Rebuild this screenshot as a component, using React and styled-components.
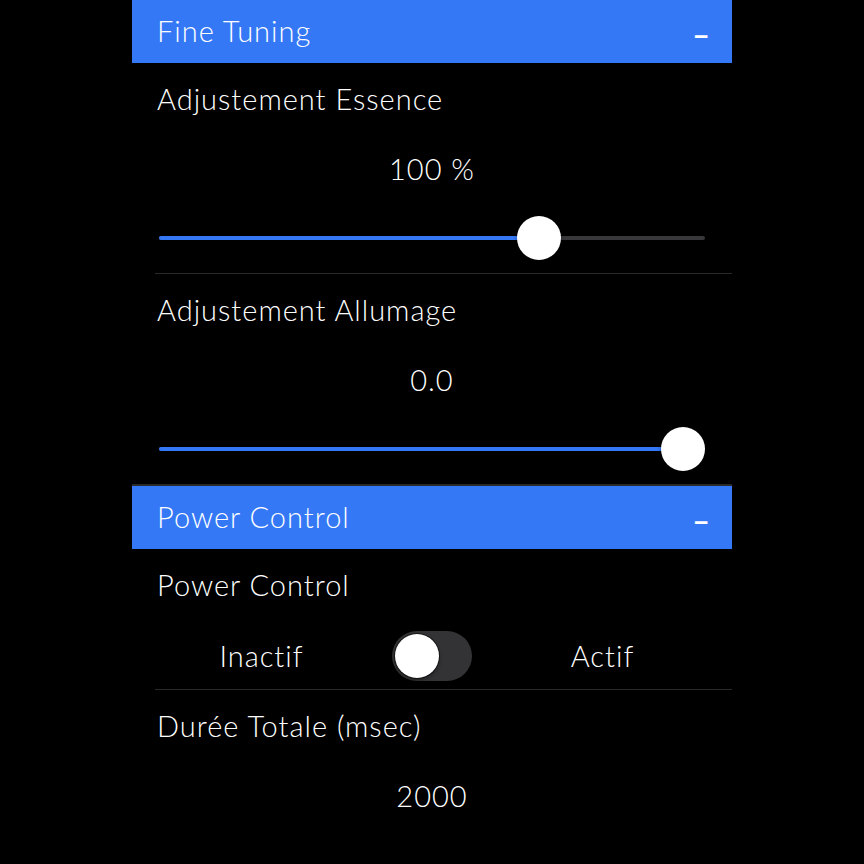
import React from 'react';
import styled, { createGlobalStyle } from 'styled-components';

const Global = createGlobalStyle`
  html, body { margin: 0; padding: 0; background: #000; }
  body { font-family: Lato, "Noto Sans", sans-serif; font-weight: 300; color: #fff; }
`;

const Page = styled.div`
  width: 600px;
  margin: 0 auto;
  background: #000;
`;

const SectionHeader = styled.div`
  height: 63px;
  background: #3478f6;
  display: flex;
  align-items: center;
  justify-content: space-between;
  padding: 0 25px 3px;
  box-sizing: border-box;
  font-size: 29px;
  letter-spacing: 1px;
`;

const Collapse = styled.span`
  font-size: 36px;
  line-height: 1;
  padding-top: 8px;
  margin-right: -3px;
  font-weight: 400;
  letter-spacing: 0;
  transform: scaleX(1.4);
  transform-origin: right center;
`;

const Cell = styled.div`
  margin-left: ${p => (p.$full ? 0 : 23)}px;
  padding-left: ${p => (p.$full ? 25 : 2)}px;
  padding-right: 25px;
  border-bottom: ${p => (p.$last ? 'none' : `${p.$full ? 2 : 1}px solid #2a2a2a`)};
`;

const Line = styled.div`
  height: 70px;
  display: flex;
  align-items: center;
  justify-content: ${p => (p.$center ? 'center' : 'flex-start')};
  font-size: 29px;
  letter-spacing: 1px;
`;

const SliderTrack = styled.div`
  position: relative;
  flex: 1;
  height: 4px;
  margin: 0 2px;
  border-radius: 2px;
  background: #38383a;
`;

const SliderFill = styled.div`
  height: 100%;
  border-radius: 2px;
  background: #3478f6;
`;

const SliderThumb = styled.div`
  position: absolute;
  top: 50%;
  width: 44px;
  height: 44px;
  margin: -22px 0 0 -22px;
  border-radius: 50%;
  background: #fff;
  box-shadow: 0 1px 4px rgba(0, 0, 0, 0.35);
`;

const ToggleRow = styled.div`
  height: 70px;
  padding-top: 3px;
  box-sizing: border-box;
  display: grid;
  grid-template-columns: 1fr 132px 1fr;
  align-items: center;
  justify-items: center;
  font-size: 29px;
  letter-spacing: 1px;
`;

const Toggle = styled.div`
  width: 80px;
  height: 50px;
  border-radius: 25px;
  background: ${p => (p.$on ? '#3478f6' : '#333335')};
  display: flex;
  align-items: center;
  justify-content: ${p => (p.$on ? 'flex-end' : 'flex-start')};
  padding: 0 3px;
  box-sizing: border-box;
`;

const ToggleKnob = styled.div`
  width: 44px;
  height: 44px;
  border-radius: 50%;
  background: #fff;
  box-shadow: 0 0 0 1px rgba(0, 0, 0, 0.5), 0 2px 4px rgba(0, 0, 0, 0.4);
`;

const TRACK_W = 546;
const THUMB = 44;

function Slider({ frac }) {
  const x = THUMB / 2 + frac * (TRACK_W - THUMB);
  return (
    <Line>
      <SliderTrack>
        <SliderFill style={{ width: x }} />
        <SliderThumb style={{ left: x }} />
      </SliderTrack>
    </Line>
  );
}

export default function App() {
  return (
    <>
      <Global />
      <Page>
        <SectionHeader>
          <span>Fine Tuning</span>
          <Collapse>-</Collapse>
        </SectionHeader>
        <Cell>
          <Line>Adjustement Essence</Line>
          <Line $center>100 %</Line>
          <Slider frac={0.713} />
        </Cell>
        <Cell $full>
          <Line>Adjustement Allumage</Line>
          <Line $center>0.0</Line>
          <Slider frac={1} />
        </Cell>
        <SectionHeader>
          <span>Power Control</span>
          <Collapse>-</Collapse>
        </SectionHeader>
        <Cell>
          <Line>Power Control</Line>
          <ToggleRow>
            <span>Inactif</span>
            <Toggle>
              <ToggleKnob />
            </Toggle>
            <span>Actif</span>
          </ToggleRow>
        </Cell>
        <Cell $last>
          <Line>Durée Totale (msec)</Line>
          <Line $center>2000</Line>
        </Cell>
      </Page>
    </>
  );
}
